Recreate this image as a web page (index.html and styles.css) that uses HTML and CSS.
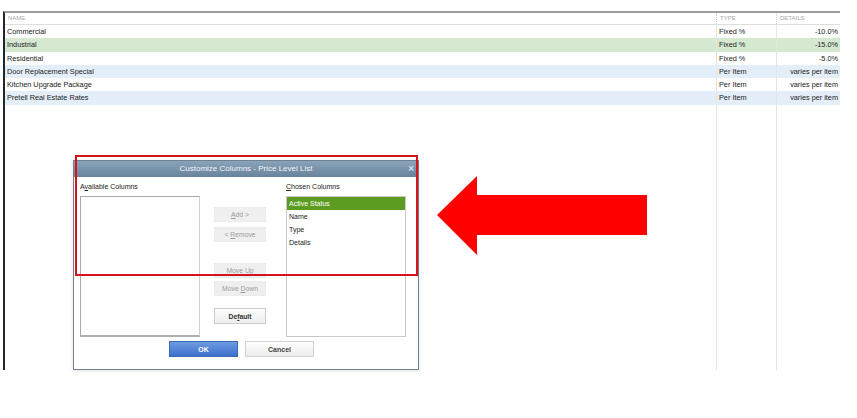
FILE: index.html
```html
<!DOCTYPE html>
<html lang="en">
<head>
  <meta charset="UTF-8" />
  <title>Price Level List – Customize Columns</title>
  <link rel="stylesheet" href="styles.css">
</head>
<body>

<!-- Price level list -->
<div class="plist">
  <div class="row head">
    <div class="c-name">NAME</div>
    <div class="c-type">TYPE</div>
    <div class="c-det">DETAILS</div>
  </div>
  <div class="row">
    <div class="c-name">Commercial</div>
    <div class="c-type">Fixed %</div>
    <div class="c-det">-10.0%</div>
  </div>
  <div class="row sel">
    <div class="c-name">Industrial</div>
    <div class="c-type">Fixed %</div>
    <div class="c-det">-15.0%</div>
  </div>
  <div class="row">
    <div class="c-name">Residential</div>
    <div class="c-type">Fixed %</div>
    <div class="c-det">-5.0%</div>
  </div>
  <div class="row alt">
    <div class="c-name">Door Replacement Special</div>
    <div class="c-type">Per Item</div>
    <div class="c-det">varies per item</div>
  </div>
  <div class="row">
    <div class="c-name">Kitchen Upgrade Package</div>
    <div class="c-type">Per Item</div>
    <div class="c-det">varies per item</div>
  </div>
  <div class="row alt">
    <div class="c-name">Pretell Real Estate Rates</div>
    <div class="c-type">Per Item</div>
    <div class="c-det">varies per item</div>
  </div>
  <div class="row fill">
    <div class="c-name"></div>
    <div class="c-type"></div>
    <div class="c-det"></div>
  </div>
</div>

<!-- Customize Columns dialog -->
<div class="dlg">
  <div class="dlg-title">
    Customize Columns - Price Level List
    <span class="dlg-close">&#215;</span>
  </div>
  <div class="dlg-body">
    <div class="cols">
      <div class="col">
        <div class="lbl">A<u>v</u>ailable Columns</div>
        <div class="lbox avail"></div>
      </div>
      <div class="btns">
        <button class="btn off b-add"><u>A</u>dd &gt;</button>
        <button class="btn off b-rem">&lt; <u>R</u>emove</button>
        <button class="btn off b-up">Move <u>U</u>p</button>
        <button class="btn off b-down">Move <u>D</u>own</button>
        <button class="btn b-def">De<u>f</u>ault</button>
      </div>
      <div class="col">
        <div class="lbl"><u>C</u>hosen Columns</div>
        <div class="lbox chosen">
          <div class="item on">Active Status</div>
          <div class="item">Name</div>
          <div class="item">Type</div>
          <div class="item">Details</div>
        </div>
      </div>
    </div>
    <div class="foot">
      <button class="btn-ok">OK</button>
      <button class="btn-cancel">Cancel</button>
    </div>
  </div>
</div>

<!-- annotations -->
<div class="mark"></div>
<svg class="arrow" width="210" height="79" viewBox="0 0 210 79">
  <polygon points="0,39 40,0 40,19 210,19 210,59 40,59 40,79" fill="#ff0000"/>
</svg>

</body>
</html>
```

FILE: styles.css
```css
*{box-sizing:border-box}

body{
  margin:0;
  background:#fff;
  font-family:'Liberation Sans',Arial,sans-serif;
  width:857px; height:418px;
  overflow:hidden;
}

/* ----------  LIST ---------- */
.plist{
  margin:11px 0 0 3px;
  width:837px; height:359px;
  border-top:2px solid #9c9c9c;
  border-left:2px solid #1d2733;
  display:flex; flex-direction:column;
}

.row{
  display:grid;
  grid-template-columns:711px 60px 64px;
  height:13.3px; line-height:13.3px;
  font-size:7.3px; color:#222;
  white-space:nowrap;
}
.row > div{padding:0 2px;overflow:hidden}
.row .c-type{border-left:1px solid #e4e4e4;padding-left:2px}
.row .c-det{border-left:1px solid #e4e4e4;text-align:right}

.row.head{
  height:12px; line-height:11px;
  border-bottom:1px solid #dedede;
  font-size:6px; color:#a8a8a8;
}
.row.head .c-name{padding-left:3px}
.row.head .c-type,
.row.head .c-det{border-left:1px dotted #cfcfcf;text-align:left;padding-left:3px}

.row.sel{background:#d5e9d1}
.row.alt{background:#e4eef9}
.row.fill{flex:1}

/* ----------  DIALOG ---------- */
.dlg{
  position:absolute;
  left:73px; top:160px;
  width:346px; height:210px;
  border:1px solid #6d7f90;
  background:#fff;
  box-shadow:0 1px 4px rgba(0,0,0,.12);
  display:flex; flex-direction:column;
}
.dlg-title{
  position:relative;
  height:16px; line-height:16px;
  text-align:center;
  font-size:8px; color:#f2f5f8;
  background:linear-gradient(#8aa3b9,#67839c);
}
.dlg-close{
  position:absolute; right:4px; top:0;
  font-size:10px; font-weight:bold; color:#d3dce5;
}

.dlg-body{flex:1;padding:4px 12px 0 6px}

.cols{display:flex}
.col{width:120px}
.lbl{height:15px;line-height:12px;font-size:7px;color:#222}

.lbox{
  height:141px;
  border:1px solid #c9c9c9;
  background:#fff;
}
.lbox.avail{
  border-color:#a9a9a9 #d0d0d0 #b0b0b0 #a9a9a9;
  border-bottom-width:2px;
}
.item{
  height:13px; line-height:13px;
  padding-left:2px;
  font-size:7px; color:#222;
}
.item.on{background:#5c9c20;color:#fff}

.btns{
  width:52px; margin:15px 20px 0 14px;
  display:flex; flex-direction:column;
}
.btn{
  height:15px; padding:0;
  font-family:inherit; font-size:6.8px;
  border:1px solid #e2e2e2;
  background:#efefef; color:#9c9c9c;
}
.btn.off{border-color:#ececec}
.b-add{margin-top:11px}
.b-rem{margin-top:5px}
.b-up{margin-top:21px}
.b-down{margin-top:3px}
.b-def{
  margin-top:12px; height:16px;
  background:linear-gradient(#fdfdfd,#ededed);
  border:1px solid #cdcdcd;
  color:#333; font-weight:bold;
}

.foot{display:flex;gap:7px;padding:4px 0 0 89px}
.btn-ok,
.btn-cancel{
  width:69px; height:16px; padding:0;
  font-family:inherit; font-size:7px; font-weight:bold;
}
.btn-ok{
  background:linear-gradient(#6d9ce2,#3d6fca);
  border:1px solid #3b66b4;
  color:#fff;
}
.btn-cancel{
  background:linear-gradient(#fff,#ececec);
  border:1px solid #d2d2d2;
  color:#444;
}

/* ----------  ANNOTATIONS ---------- */
.mark{
  position:absolute;
  left:75px; top:155px;
  width:343px; height:121px;
  border:2px solid #d2141c;
}
.arrow{position:absolute;left:437px;top:176px}
```
